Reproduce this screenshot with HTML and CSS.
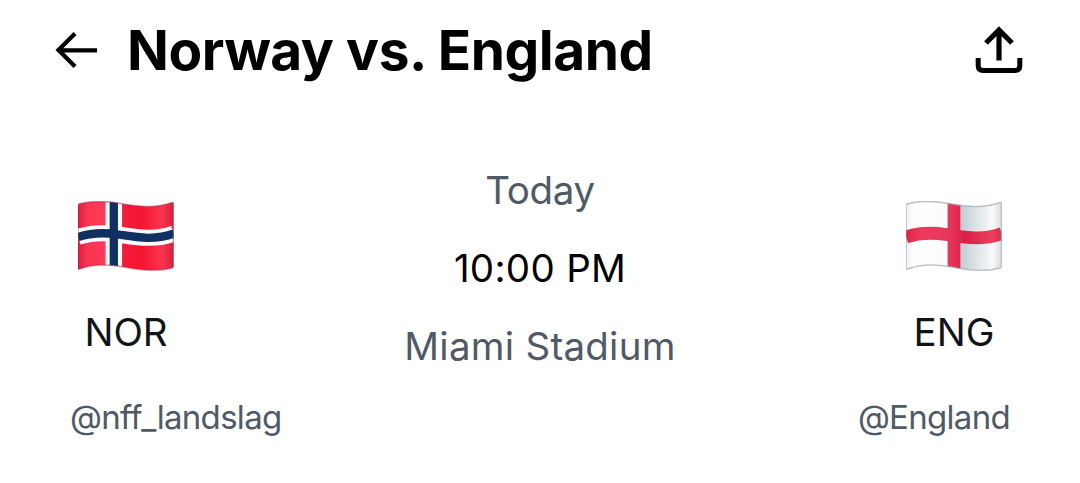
FILE: index.html
```html
<!DOCTYPE html>
<html lang="en">
<head>
    <meta charset="UTF-8">
    <meta name="viewport" content="width=device-width, initial-scale=1.0">
    <title>Norway vs. England</title>
    <link rel="stylesheet" href="styles.css">
</head>
<body>
    <header class="topbar">
        <svg class="back" viewBox="0 0 42 38">
            <path d="M20 2.5 L3.5 19 L20 35.500 M3.500 19.300 H42" fill="none" stroke="#000" stroke-width="4.300"/>
        </svg>
        <h1 class="title">Norway vs. England</h1>
        <svg class="share" viewBox="0 0 48 48">
            <path d="M11 17 L24 4 L37 17 M24 4 V34.500" fill="none" stroke="#000" stroke-width="5.200"/>
            <path d="M3.200 32 V39.500 Q3.200 44.500 8.200 44.500 H39.800 Q44.800 44.500 44.800 39.500 V32" fill="none" stroke="#000" stroke-width="5"/>
        </svg>
    </header>

    <main class="match">
        <div class="team">
            <svg class="flag" viewBox="0 0 96 70">
                <defs>
                    <clipPath id="wave">
                        <path d="M0 4.500 Q0 3.300 1.500 2.700 C12 0 27 0 40 2 C55 4.500 74 8.500 94 1.500 Q95.500 1 95.500 2.500 V65 Q95.500 66.500 94 67 C80 71 60 69 46 66 C30 63 14 63 2 68 Q0 69 0 67 Z"/>
                    </clipPath>
                    <linearGradient id="red" x1="0" x2="1" y1="0" y2="0">
                        <stop offset="0" stop-color="#d81f3c"/>
                        <stop offset=".1" stop-color="#fb3552"/>
                        <stop offset=".3" stop-color="#fc3a58"/>
                        <stop offset=".5" stop-color="#f5183a"/>
                        <stop offset=".65" stop-color="#f4152f"/>
                        <stop offset=".88" stop-color="#fb3450"/>
                        <stop offset="1" stop-color="#d4203a"/>
                    </linearGradient>
                </defs>
                <g clip-path="url(#wave)">
                    <path d="M0 0H96V70H0z" fill="url(#red)"/>
                    <g fill="none">
                        <path d="M0 36 C12 32 27 31.500 40 33.500 C57 36 76 40 96 32.500" stroke="#f8f9fc" stroke-width="16"/>
                        <path d="M35.800 0 V70" stroke="#f8f9fc" stroke-width="16.500"/>
                        <path d="M0 36 C12 32 27 31.500 40 33.500 C57 36 76 40 96 32.500 M35.800 0 V70" stroke="#0f3060" stroke-width="8.300"/>
                    </g>
                </g>
                <path class="edge edge-red" d="M0 4.500 Q0 3.300 1.500 2.700 C12 0 27 0 40 2 C55 4.500 74 8.500 94 1.500 Q95.500 1 95.500 2.500 V65 Q95.500 66.500 94 67 C80 71 60 69 46 66 C30 63 14 63 2 68 Q0 69 0 67 Z"/>
            </svg>
            <div class="code">NOR</div>
            <div class="handle">@nff_landslag</div>
        </div>

        <div class="info">
            <div class="day">Today</div>
            <div class="time">10:00 PM</div>
            <div class="venue">Miami Stadium</div>
        </div>

        <div class="team team-away">
            <svg class="flag" viewBox="0 0 96 70">
                <defs>
                    <linearGradient id="silver" x1="0" x2="1" y1="0" y2="0">
                        <stop offset="0" stop-color="#eceef1"/>
                        <stop offset=".08" stop-color="#fff"/>
                        <stop offset=".5" stop-color="#fafbfc"/>
                        <stop offset=".58" stop-color="#c4ccd5"/>
                        <stop offset=".75" stop-color="#e0e5e9"/>
                        <stop offset=".9" stop-color="#f8f9fa"/>
                        <stop offset="1" stop-color="#d8dde1"/>
                    </linearGradient>
                    <linearGradient id="cross" gradientUnits="userSpaceOnUse" x1="0" x2="96" y1="0" y2="0">
                        <stop offset="0" stop-color="#d8253f"/>
                        <stop offset=".15" stop-color="#ee3a5a"/>
                        <stop offset=".45" stop-color="#e8365a"/>
                        <stop offset=".62" stop-color="#d91f48"/>
                        <stop offset=".9" stop-color="#ec3f5c"/>
                        <stop offset="1" stop-color="#d22c48"/>
                    </linearGradient>
                </defs>
                <g clip-path="url(#wave)">
                    <path d="M0 0H96V70H0z" fill="url(#silver)"/>
                    <path d="M0 36 C12 32 27 31.500 40 33.500 C57 36 76 40 96 32.500 M48 0 V70" fill="none" stroke="url(#cross)" stroke-width="12.800"/>
                </g>
                <path class="edge edge-grey" d="M0 4.500 Q0 3.300 1.500 2.700 C12 0 27 0 40 2 C55 4.500 74 8.500 94 1.500 Q95.500 1 95.500 2.500 V65 Q95.500 66.500 94 67 C80 71 60 69 46 66 C30 63 14 63 2 68 Q0 69 0 67 Z"/>
            </svg>
            <div class="code">ENG</div>
            <div class="handle">@England</div>
        </div>
    </main>
</body>
</html>
```
FILE: styles.css
```css
* {
    margin: 0;
    padding: 0;
    box-sizing: border-box;
}

body {
    font-family: Inter, "Liberation Sans", sans-serif;
    background-color: #fff;
    color: #000;
    height: 483px;
    overflow: hidden;
}

.topbar {
    display: flex;
    align-items: center;
    height: 100px;
    padding: 0 57px 0 55px;
}

.back {
    width: 42px;
    height: 38px;
}

.title {
    flex: 1;
    margin-left: 30px;
    font-size: 55px;
    font-weight: 680;
    line-height: 100px;
    letter-spacing: -0.45px;
    white-space: nowrap;
}

.share {
    width: 48px;
    height: 48px;
}

.match {
    display: flex;
    justify-content: space-between;
    padding: 0 70px;
}

.team {
    display: flex;
    flex-direction: column;
    align-items: flex-start;
    width: 112px;
    padding-top: 101px;
}

.team-away {
    align-items: flex-end;
}

.flag {
    align-self: center;
    width: 96px;
    height: 70px;
}

.edge {
    fill: none;
    stroke-width: 1.5;
}

.edge-red {
    stroke: #a02040;
    stroke-opacity: 0.4;
}

.edge-grey {
    stroke: #9aa0a8;
    stroke-opacity: 0.6;
}

.code {
    align-self: center;
    margin-top: 37px;
    font-size: 38.5px;
    line-height: 48px;
    color: #0f1419;
}

.handle {
    margin-top: 37px;
    font-size: 33px;
    line-height: 48px;
    letter-spacing: -0.7px;
    color: #505a66;
    white-space: nowrap;
}

.info {
    display: flex;
    flex-direction: column;
    align-items: center;
    padding-top: 51px;
    font-size: 38.5px;
    line-height: 78px;
    color: #505a66;
    white-space: nowrap;
}

.day {
    letter-spacing: -0.3px;
}

.time {
    color: #000;
    letter-spacing: 0.3px;
}

.venue {
    letter-spacing: 0.25px;
}
```
